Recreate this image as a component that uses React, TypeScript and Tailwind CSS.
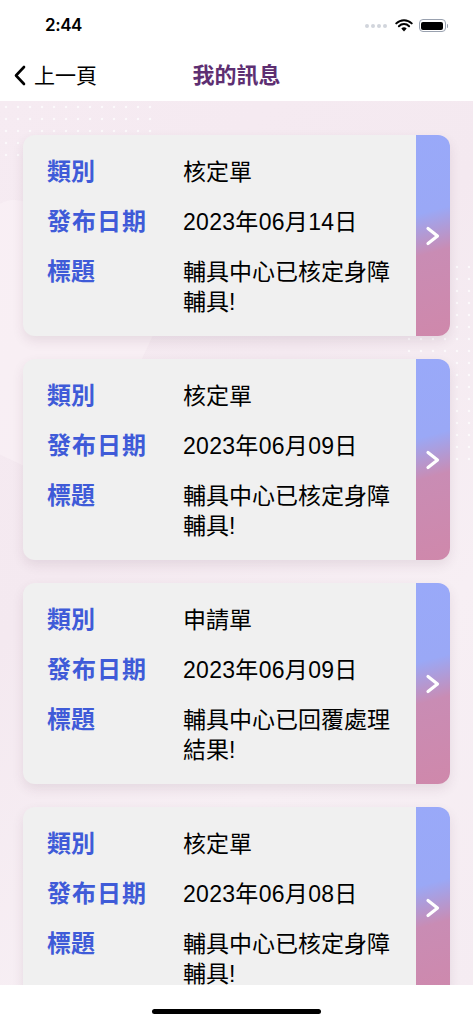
import React from 'react';

type Message = {
  category: string;
  date: string;
  title: string;
};

const messages: Message[] = [
  { category: '核定單', date: '2023年06月14日', title: '輔具中心已核定身障輔具!' },
  { category: '核定單', date: '2023年06月09日', title: '輔具中心已核定身障輔具!' },
  { category: '申請單', date: '2023年06月09日', title: '輔具中心已回覆處理結果!' },
  { category: '核定單', date: '2023年06月08日', title: '輔具中心已核定身障輔具!' },
];

const cjk = 'font-["Liberation_Sans","Noto_Sans_CJK_TC",sans-serif]';

function StatusBar() {
  return (
    <div className="h-[50px] flex items-center justify-between pl-[45px] pr-[25px] bg-white">
      <span className="text-[17px] font-semibold tracking-tight text-black font-['Inter',sans-serif] mt-[2px]">2:44</span>
      <div className="flex items-center gap-[6px] mt-[1px]">
        <div className="flex items-center gap-[2px] mr-[2px]">
          {[0, 1, 2, 3].map(i => (
            <span key={i} className="h-[4px] w-[4px] rounded-full bg-gray-300" />
          ))}
        </div>
        <svg width="18" height="13" viewBox="0 0 18 13">
          <path d="M9 12.5 L6.3 9.6 A3.8 3.8 0 0 1 11.7 9.6 Z" fill="black" />
          <path d="M3.9 7.2 A7.2 7.2 0 0 1 14.1 7.2" stroke="black" strokeWidth="2" fill="none" strokeLinecap="round" />
          <path d="M1.3 4.4 A10.8 10.8 0 0 1 16.7 4.4" stroke="black" strokeWidth="2" fill="none" strokeLinecap="round" />
        </svg>
        <div className="flex items-center">
          <div className="h-[13px] w-[27px] rounded-[4px] border border-gray-400 p-[1.5px]">
            <div className="h-full w-full rounded-[2px] bg-black" />
          </div>
          <div className="h-[4px] w-[1.5px] rounded-r bg-gray-400 ml-[1px]" />
        </div>
      </div>
    </div>
  );
}

function NavBar() {
  return (
    <div className={`relative h-[51px] flex items-center justify-center bg-white ${cjk}`}>
      <button className="absolute left-[13px] top-0 h-full flex items-center gap-[8px] text-black">
        <svg width="13" height="21" viewBox="0 0 13 21">
          <path d="M11 2 L3 10.5 L11 19" stroke="black" strokeWidth="2.6" fill="none" strokeLinecap="round" strokeLinejoin="round" />
        </svg>
        <span className="text-[21px] leading-none">上一頁</span>
      </button>
      <h1 className="text-[22px] font-bold text-[#5e2f72] leading-none">我的訊息</h1>
    </div>
  );
}

function MessageCard({ msg }: { msg: Message }) {
  return (
    <div className="h-[201px] shrink-0 flex rounded-[12px] overflow-hidden bg-[#f0f0f0] shadow-[0_5px_12px_rgba(80,40,70,0.10)]">
      <div className={`flex-1 pl-[24px] pt-[23px] flex flex-col gap-[22px] ${cjk}`}>
        <div className="flex items-center h-[28px]">
          <span className="w-[136px] text-[24px] font-bold text-[#3f5bd8]">類別</span>
          <span className="text-[23px] text-black">{msg.category}</span>
        </div>
        <div className="flex items-center h-[28px]">
          <span className="w-[136px] text-[24px] font-bold text-[#3f5bd8] tracking-[1px]">發布日期</span>
          <span className="text-[23px] text-black tracking-[0.3px]">{msg.date}</span>
        </div>
        <div className="flex items-start -mt-[1px]">
          <span className="w-[136px] shrink-0 text-[24px] leading-[30px] font-bold text-[#3f5bd8]">標題</span>
          <span className="w-[215px] text-[23px] leading-[30px] text-black">{msg.title}</span>
        </div>
      </div>
      <div className="w-[34px] flex items-center justify-center bg-[linear-gradient(165deg,#99a9f9_0%,#9aa8f6_38%,#c98cb4_58%,#cf88ab_100%)]">
        <svg width="16" height="22" viewBox="0 0 16 22">
          <path d="M3 3.5 L12.5 11 L3 18.5" stroke="white" strokeWidth="3.2" fill="none" strokeLinecap="round" strokeLinejoin="round" />
        </svg>
      </div>
    </div>
  );
}

export default function App() {
  return (
    <div className="w-[473px] h-[1024px] flex flex-col bg-white overflow-hidden">
      <StatusBar />
      <NavBar />

      {/* Message list */}
      <div className="relative flex-1 overflow-hidden bg-[linear-gradient(135deg,#f6ebf2_0%,#f4e9f0_40%,#f7eff4_70%,#f5ecf2_100%)]">
        <div className="absolute left-0 top-0 w-[160px] h-[60px] opacity-70 bg-[radial-gradient(circle,#ffffff_1.3px,transparent_1.6px)] bg-[length:12px_12px]" />
        <div className="absolute right-0 top-[160px] w-[70px] h-[200px] opacity-70 bg-[radial-gradient(circle,#ffffff_1.3px,transparent_1.6px)] bg-[length:12px_12px]" />
        <div className="absolute left-[-60px] top-[120px] w-[200px] h-[240px] rotate-[25deg] bg-[#fbf3f7] opacity-50 rounded-[30px]" />
        <div className="relative flex flex-col gap-[23px] px-[23px] pt-[34px]">
          {messages.map((m, i) => (
            <MessageCard key={i} msg={m} />
          ))}
        </div>
      </div>

      {/* Home indicator */}
      <div className="h-[39px] shrink-0 bg-white flex items-start justify-center pt-[24px]">
        <div className="h-[5px] w-[169px] rounded-full bg-black" />
      </div>
    </div>
  );
}
